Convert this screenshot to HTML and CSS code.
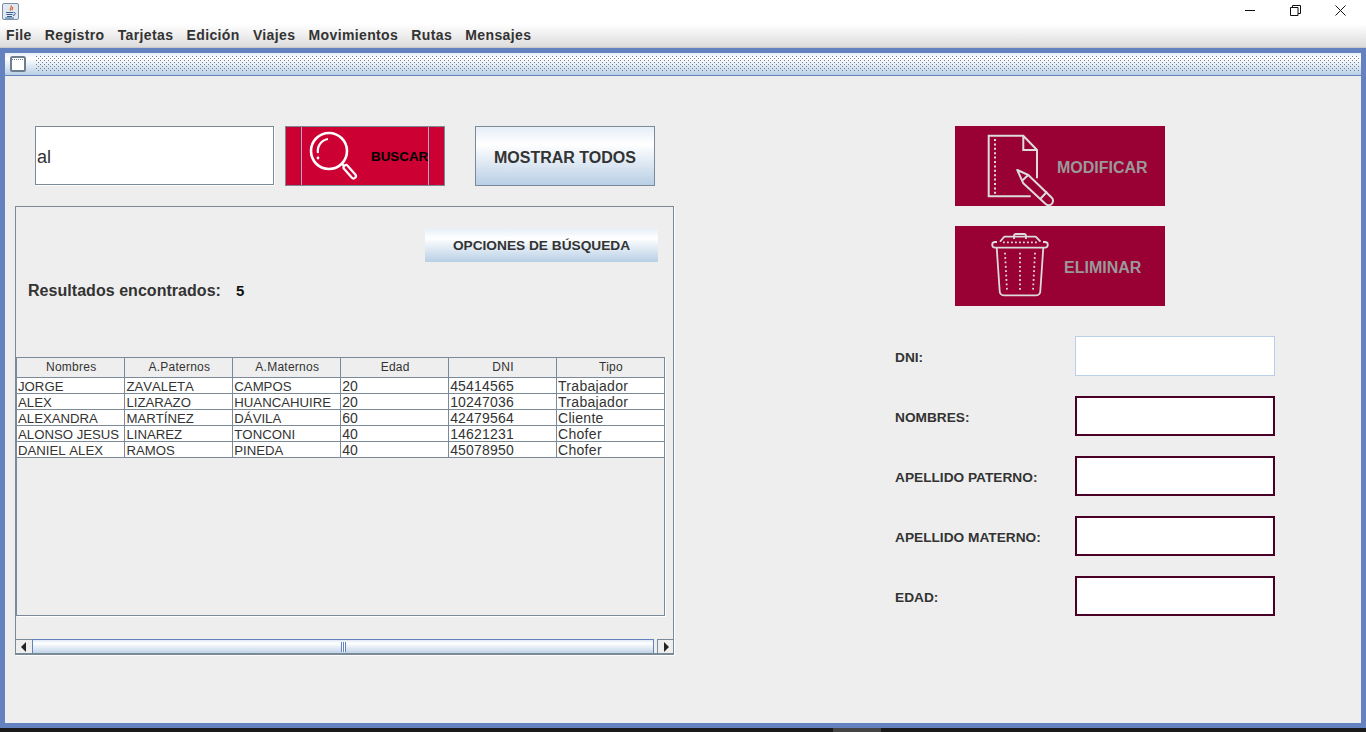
FILE: index.html
```html
<!DOCTYPE html>
<html lang="es">
<head>
<meta charset="utf-8">
<title>Sistema</title>
<link rel="stylesheet" href="styles.css">
</head>
<body>
<header class="titlebar">
  <svg class="java-icon" width="18" height="18" viewBox="0 0 18 18">
    <rect x="0.5" y="0.5" width="16" height="16" rx="1.5" fill="#dfe8f3" stroke="#7c8ea3"/>
    <path d="M9 2.5c1.5 2-2 3-.5 5M10.5 4c.8 1.2-1 2-.2 3.5" fill="none" stroke="#e0662a" stroke-width="1.3"/>
    <path d="M4 9.5h7M4.5 11.5h6M5 13.5h5M3 15h9" fill="none" stroke="#35608e" stroke-width="1"/>
    <path d="M11.5 9.5c2.5-.5 2.5 2.5-.5 3" fill="none" stroke="#35608e" stroke-width="1"/>
  </svg>
  <div class="win-controls">
    <svg width="11" height="11" viewBox="0 0 11 11"><path d="M0 5.5h10" stroke="#111" fill="none"/></svg>
    <svg width="11" height="11" viewBox="0 0 11 11"><path d="M.5 2.5h7.500v8h-7.500zM2.500 2.500v-2h8v8h-2.500" stroke="#111" fill="none"/></svg>
    <svg width="11" height="11" viewBox="0 0 11 11"><path d="M.5.5l10 10M10.500.5l-10 10" stroke="#111" fill="none"/></svg>
  </div>
</header>
<nav class="menubar">
  <span>File</span><span>Registro</span><span>Tarjetas</span><span>Edición</span><span>Viajes</span><span>Movimientos</span><span>Rutas</span><span>Mensajes</span>
</nav>
<main class="frame">
  <div class="frame-title">
    <svg class="frame-icon" width="16" height="16" viewBox="0 0 16 16">
      <rect x="1" y="1" width="14" height="14" rx="1.500" fill="#fff" stroke="#6f7e8e" stroke-width="2"/>
      <path d="M2 3.500h12" stroke="#6f7e8e" stroke-dasharray="1 1"/>
    </svg>
    <div class="bumps"></div>
  </div>
  <div class="content">
    <section class="left">
      <div class="search-row">
        <div class="search-input">al</div>
        <div class="btn-buscar">
          <div class="buscar-inner">
            <svg class="buscar-icon" width="62" height="58" viewBox="0 0 62 58">
              <circle cx="27" cy="24" r="18" fill="none" stroke="#fff" stroke-width="2.600"/>
              <path d="M16 26a12 12 0 0 1 10-14" fill="none" stroke="#fff" stroke-width="2.200"/>
              <circle cx="16" cy="31" r="1.400" fill="#fff"/>
              <path d="M40 37l3 3" stroke="#fff" stroke-width="2.400"/>
              <path d="M44 40.500l7.500 8.500" stroke="#fff" stroke-width="7" stroke-linecap="round"/>
              <path d="M44 40.500l7.500 8.500" stroke="#cc0033" stroke-width="2.600" stroke-linecap="round"/>
            </svg>
            <span>BUSCAR</span>
          </div>
        </div>
        <div class="btn-grad btn-mostrar">MOSTRAR TODOS</div>
      </div>
      <div class="panel">
        <div class="panel-head">
          <div class="btn-grad btn-opciones">OPCIONES DE BÚSQUEDA</div>
        </div>
        <div class="results"><span>Resultados encontrados:</span><b>5</b></div>
        <div class="pane">
          <table class="grid">
            <thead>
              <tr><th>Nombres</th><th>A.Paternos</th><th>A.Maternos</th><th>Edad</th><th>DNI</th><th>Tipo</th></tr>
            </thead>
            <tbody>
              <tr><td>JORGE</td><td>ZAVALETA</td><td>CAMPOS</td><td>20</td><td>45414565</td><td>Trabajador</td></tr>
              <tr><td>ALEX</td><td>LIZARAZO</td><td>HUANCAHUIRE</td><td>20</td><td>10247036</td><td>Trabajador</td></tr>
              <tr><td>ALEXANDRA</td><td>MARTÍNEZ</td><td>DÁVILA</td><td>60</td><td>42479564</td><td>Cliente</td></tr>
              <tr><td>ALONSO JESUS</td><td>LINAREZ</td><td>TONCONI</td><td>40</td><td>14621231</td><td>Chofer</td></tr>
              <tr><td>DANIEL ALEX</td><td>RAMOS</td><td>PINEDA</td><td>40</td><td>45078950</td><td>Chofer</td></tr>
            </tbody>
          </table>
        </div>
        <div class="scrollbar">
          <div class="arrow"><svg width="6" height="10" viewBox="0 0 6 10"><path d="M5 0v10L0 5z" fill="#222"/></svg></div>
          <div class="thumb"><i></i></div>
          <div class="arrow arrow-end"><svg width="6" height="10" viewBox="0 0 6 10"><path d="M1 0v10l5-5z" fill="#222"/></svg></div>
        </div>
      </div>
    </section>
    <section class="right">
      <div class="actions">
        <div class="btn-action">
          <svg class="action-icon" width="102" height="80" viewBox="0 0 102 80" fill="none">
            <path d="M75.700 70.300H33.700V9.700h34.600L82 24v28.300M68.300 9.700V24H82" stroke="#dcdcdc" stroke-width="2"/>
            <path d="M40 13v55" stroke="#dcdcdc" stroke-width="2" stroke-dasharray="2 2.400"/>
            <path d="M62.300 44l11 5 23 22.300a3.500 3.500 0 0 1-5.400 7L68.300 57.300zM66.700 55l6.600-6M85.200 73l7-7.500" stroke="#dcdcdc" stroke-width="2" stroke-linejoin="round"/>
          </svg>
          <span class="action-label">MODIFICAR</span>
        </div>
        <div class="btn-action">
          <svg class="action-icon" width="102" height="80" viewBox="0 0 102 80" fill="none">
            <path d="M59 15v-3a2 2 0 0 1 2-2h8a2 2 0 0 1 2 2v3" stroke="#dcdcdc" stroke-width="1.800" transform="translate(0 -2)"/>
            <path d="M45 15.700l3.300-4a2 2 0 0 1 1.500-1h30.400a2 2 0 0 1 1.500 1l3.800 4" stroke="#dcdcdc" stroke-width="1.800"/>
            <path d="M42 16h-2a2.800 2.800 0 0 0 0 5.600h50a2.800 2.800 0 0 0 0-5.600h-2" stroke="#dcdcdc" stroke-width="1.800"/>
            <path d="M48 16.300h34" stroke="#dcdcdc" stroke-width="1.800" stroke-dasharray="1.800 2.200"/>
            <path d="M41.700 21.600l3 43.700a4 4 0 0 0 4 4h32.600a4 4 0 0 0 4-4l3-43.700" stroke="#dcdcdc" stroke-width="1.800"/>
            <path d="M50 26.700l2 38M65 26.700v38M80 26.700l-2 38" stroke="#dcdcdc" stroke-width="1.800" stroke-dasharray="1.800 2.600"/>
          </svg>
          <span class="action-label label-del">ELIMINAR</span>
        </div>
      </div>
      <form class="form">
        <label>DNI:</label><div class="field field-light"></div>
        <label>NOMBRES:</label><div class="field"></div>
        <label>APELLIDO PATERNO:</label><div class="field"></div>
        <label>APELLIDO MATERNO:</label><div class="field"></div>
        <label>EDAD:</label><div class="field"></div>
      </form>
    </section>
  </div>
</main>
<footer class="taskbar"><i></i></footer>
</body>
</html>
```

FILE: styles.css
```css
* { box-sizing: border-box; }
html, body { margin: 0; height: 732px; overflow: hidden; }
body {
  display: flex;
  flex-direction: column;
  width: 1366px;
  font-family: "Liberation Sans", Arial, sans-serif;
  color: #333;
  background: #eee;
}
.titlebar {
  height: 24px;
  flex: none;
  background: #fff;
  display: flex;
  justify-content: space-between;
  align-items: flex-start;
  padding: 3px 20px 0 2px;
}
.win-controls { display: flex; gap: 34px; padding-top: 2px; }
.menubar {
  height: 24px;
  flex: none;
  display: flex;
  gap: 13.200px;
  align-items: center;
  padding: 0 0 2px 6px;
  font-size: 14px;
  font-weight: 700;
  letter-spacing: 0.370px;
  background: linear-gradient(#fff, #dcdcdc);
  border-bottom: 1px solid #c9c9c9;
}
.frame {
  flex: 1;
  display: flex;
  flex-direction: column;
  border: 5px solid #6382bf;
  min-height: 0;
}
.frame-title {
  height: 23px;
  flex: none;
  display: flex;
  align-items: center;
  gap: 10px;
  padding: 0 1px 0 5px;
  background: linear-gradient(#e6eef7, #fff 25%, #b8cfe5);
  border-bottom: 1px solid #6382bf;
}
.frame-icon { flex: none; }
.bumps {
  flex: 1;
  height: 16px;
  background-image:
    radial-gradient(circle at 0.500px 0.500px, #6b7d92 0.700px, transparent 0.800px),
    radial-gradient(circle at 0.500px 0.500px, #6b7d92 0.700px, transparent 0.800px);
  background-size: 4px 4px;
  background-position: 0 0, 2px 2px;
}
.content {
  flex: 1;
  display: grid;
  grid-template-columns: 680px 1fr;
  padding-top: 50px;
  background: #eee;
  min-height: 0;
}
.left { padding-left: 10px; display: flex; flex-direction: column; gap: 20px; }
.search-row { display: flex; height: 60px; padding-left: 20px; align-items: flex-start; }
.search-input {
  width: 239px;
  height: 59px;
  background: #fff;
  border: 1px solid #7a8a99;
  box-shadow: 1px 1px 0 #fff;
  font-size: 18px;
  line-height: 60px;
  padding-left: 1px;
}
.btn-buscar {
  width: 160px;
  height: 60px;
  margin-left: 11px;
  padding: 0 15px;
  background: #cc0033;
  border: 1px solid #7a8a99;
}
.buscar-inner {
  height: 100%;
  display: flex;
  align-items: center;
  border-left: 1px solid #9fb0c4;
  border-right: 1px solid #9fb0c4;
  color: #000;
  font-size: 13.400px;
  font-weight: 700;
  white-space: nowrap;
}
.buscar-icon { flex: none; }
.buscar-inner span { margin-left: 7px; }
.btn-grad {
  display: flex;
  align-items: center;
  justify-content: center;
  font-weight: 700;
  background: linear-gradient(#e6eef7, #fff 30%, #b8cfe5);
}
.btn-mostrar {
  width: 180px;
  height: 60px;
  margin-left: 30px;
  padding-top: 3px;
  font-size: 16px;
  border: 1px solid #7a8a99;
}
.panel {
  width: 659px;
  height: 449px;
  border: 1px solid #7a8a99;
  box-shadow: 1px 1px 0 #fff;
  display: flex;
  flex-direction: column;
}
.panel-head { display: flex; justify-content: flex-end; padding: 21px 15px 0 0; }
.btn-opciones { width: 233px; height: 34px; font-size: 13.700px; }
.results {
  display: flex;
  align-items: baseline;
  gap: 15px;
  height: 20px;
  margin-top: 19px;
  padding-left: 12px;
  font-size: 16px;
  font-weight: 700;
  line-height: 20px;
  letter-spacing: 0.040px;
  color: #333;
}
.results b { color: #111; font-size: 15px; }
.pane {
  margin-top: 56px;
  width: 649px;
  height: 260px;
  border: 1px solid #7a8a99;
  box-shadow: 1px 1px 0 #fff;
}
.grid {
  table-layout: fixed;
  width: 648px;
  border-collapse: collapse;
  font-size: 14px;
  color: #333;
}
.grid th {
  height: 19px;
  padding: 0 0 0 1px;
  font-size: 12px;
  font-weight: 400;
  letter-spacing: 0.250px;
  background: #eee;
  border: 1px solid #7a8a99;
  border-top: 0;
  border-left: 0;
}
.grid td {
  height: 16px;
  padding: 2px 0 0 1px;
  line-height: 13px;
  background: #fff;
  border: 1px solid #7a8a99;
  border-top: 0;
  border-left: 0;
  white-space: nowrap;
  overflow: hidden;
}
.grid td:nth-child(-n+3) { font-size: 13.200px; font-kerning: none; }
.grid td:nth-child(5) { letter-spacing: 0.200px; }
.grid td:nth-child(6) { letter-spacing: 0.300px; }
.scrollbar {
  margin-top: 23px;
  height: 15px;
  display: flex;
  border-bottom: 1px solid #7a8a99;
}
.arrow {
  width: 16px;
  flex: none;
  display: flex;
  align-items: center;
  justify-content: center;
  background: #eee;
  border-top: 1px solid #7a8a99;
}
.arrow-end { border-left: 1px solid #7a8a99; margin-left: 3px; }
.thumb {
  flex: 1;
  display: flex;
  align-items: center;
  justify-content: center;
  background: linear-gradient(#dfe9f5, #fff 25%, #c0d3e8);
  border: 1px solid #6382bf;
  border-width: 1px 1px 0 1px;
}
.thumb i {
  width: 5px;
  height: 10px;
  background: repeating-linear-gradient(90deg, #6382bf 0 1px, #fff 1px 2px);
}
.right { padding-left: 210px; display: flex; flex-direction: column; gap: 30px; }
.actions { display: flex; flex-direction: column; gap: 20px; padding-left: 60px; }
.btn-action {
  width: 210px;
  height: 80px;
  background: #990033;
  display: flex;
  align-items: center;
  color: #999;
  font-size: 16px;
  font-weight: 700;
}
.action-icon { flex: none; }
.action-label { padding-top: 4px; }
.label-del { margin-left: 7px; }
.form {
  display: grid;
  grid-template-columns: 180px 200px;
  grid-auto-rows: 40px;
  row-gap: 20px;
  align-items: center;
  margin: 0;
}
.form label { font-size: 13.700px; font-weight: 700; color: #333; padding-top: 2px; }
.field { height: 40px; background: #fff; border: 2px solid #4a0026; }
.field-light { border: 1px solid #b8cfe5; }
.taskbar { height: 4px; flex: none; background: #1a1a1a; position: relative; }
.taskbar i { position: absolute; left: 833px; top: 0; width: 48px; height: 4px; background: #444; }
```
